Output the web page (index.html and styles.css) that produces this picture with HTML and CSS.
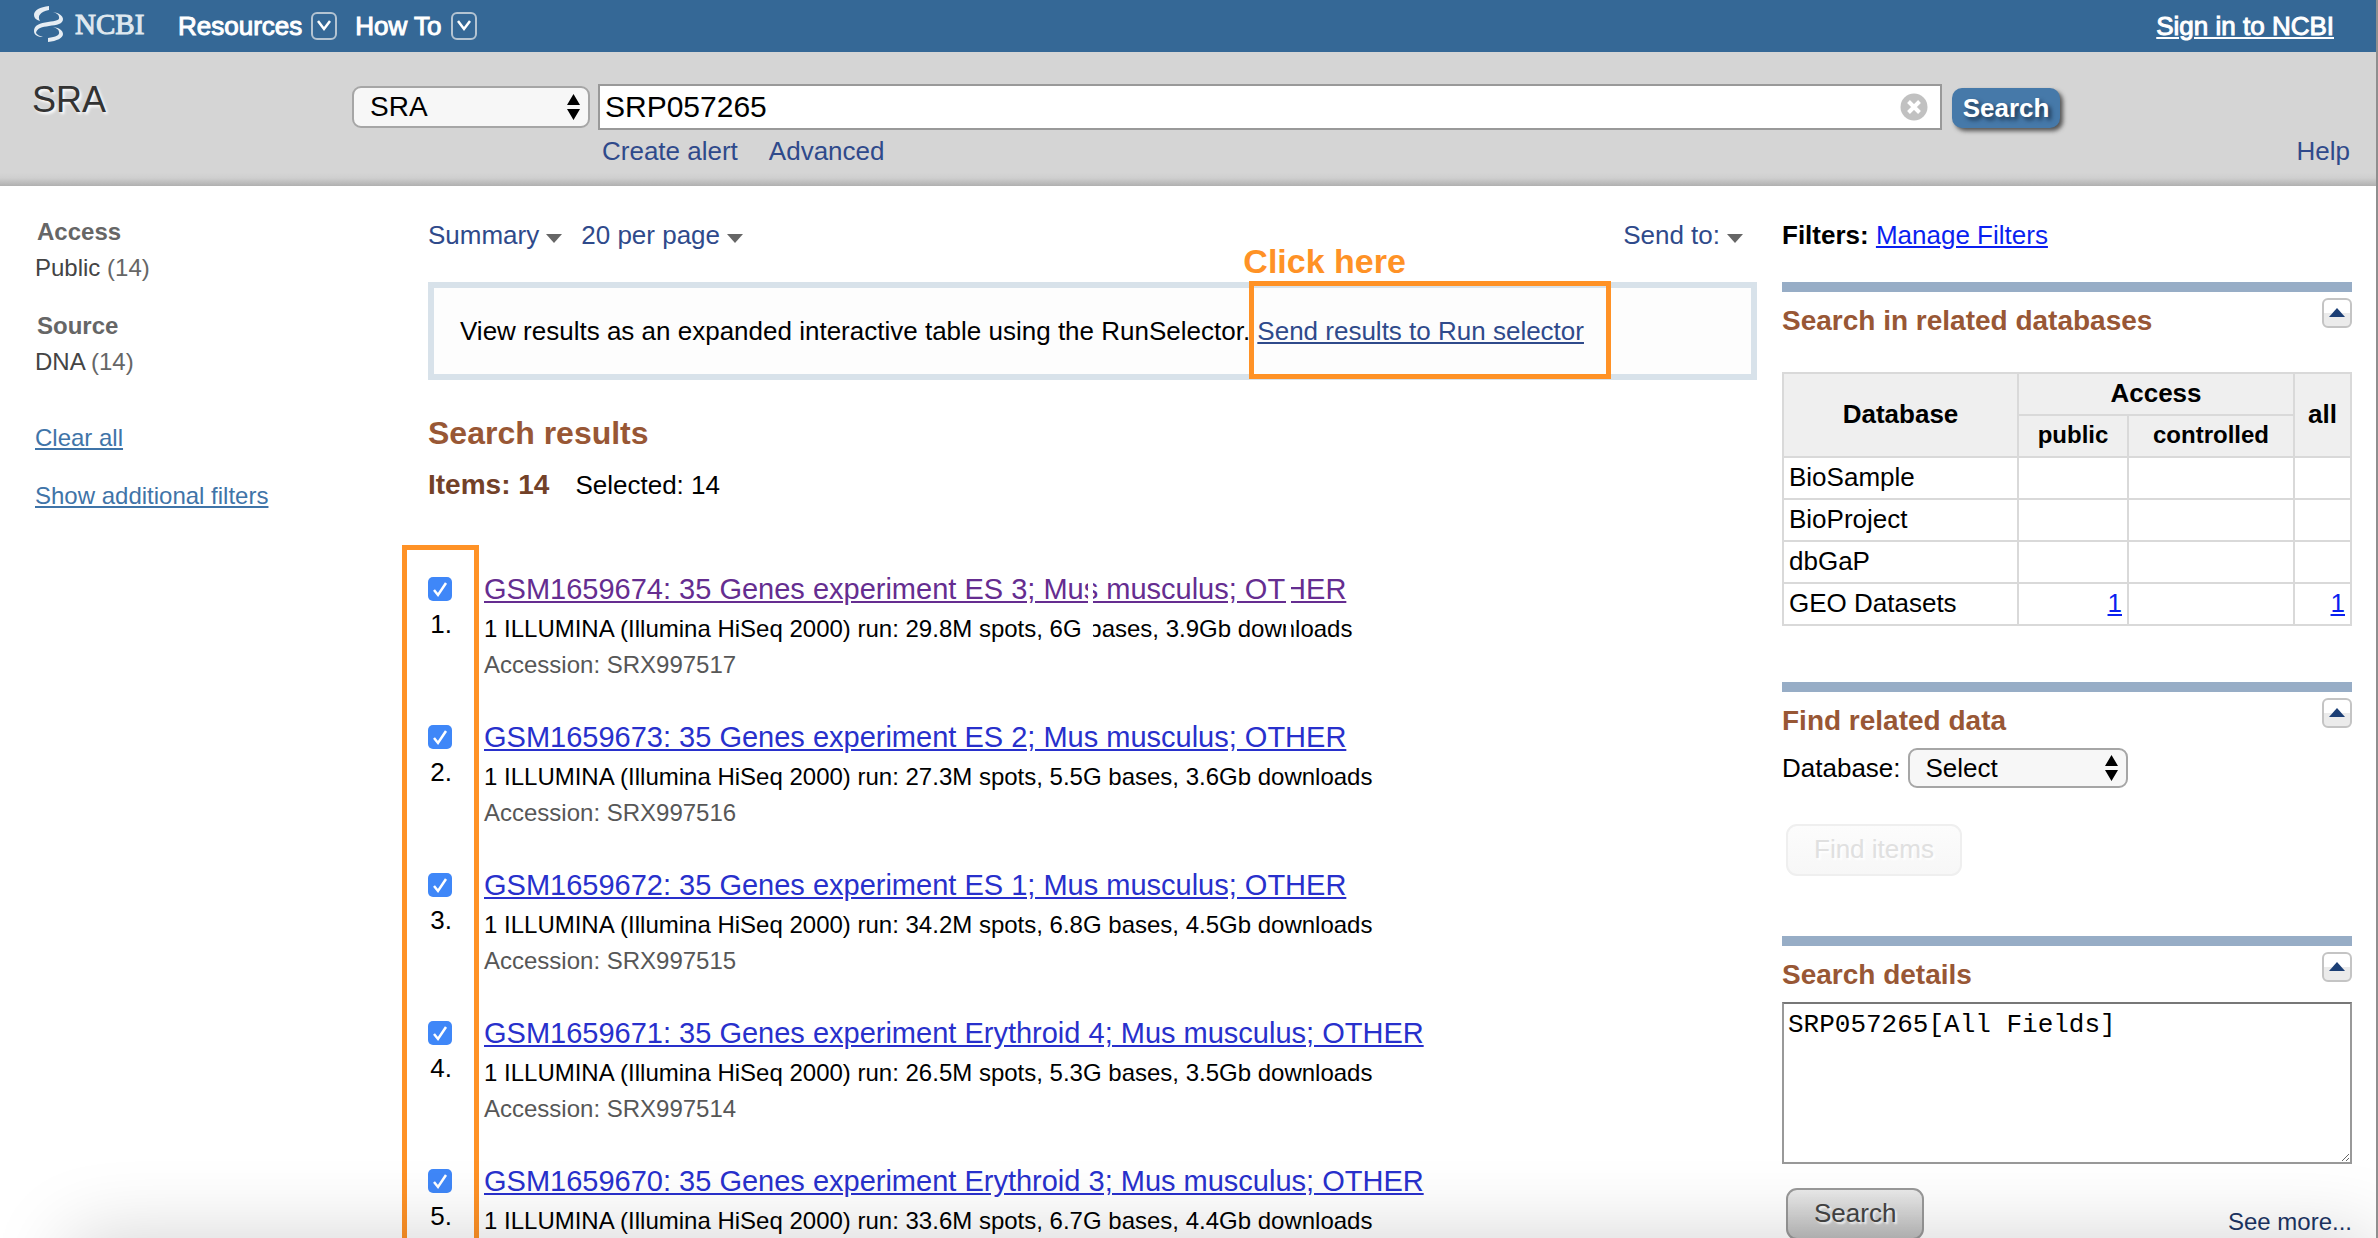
FILE: index.html
```html
<!DOCTYPE html>
<html lang="en">
<head>
<meta charset="utf-8">
<title>SRP057265 - SRA - NCBI</title>
<link rel="stylesheet" href="styles.css">
</head>
<body>
<svg width="0" height="0" class="defs" aria-hidden="true">
  <symbol id="updown" viewBox="0 0 13 26"><path d="M6.500 0L13 11H0zM0 15h13L6.500 26z"/></symbol>
  <symbol id="caret" viewBox="0 0 16 9"><path d="M0 0h16L8 9z" fill="#666"/></symbol>
  <symbol id="menu" viewBox="0 0 26 28"><rect x="1" y="1" width="24" height="26" rx="5" fill="none" stroke="#b4c4d2" stroke-width="2"/><path d="M7 9l6 8 6-8" fill="none" stroke="#fff" stroke-width="2.500"/></symbol>
  <symbol id="up" viewBox="0 0 16 9"><path d="M8 0l8 9H0z" fill="#1c3f75"/></symbol>
</svg>
<div class="app">
  <header class="topbar">
    <a class="logo" href="#" aria-label="NCBI home">
      <svg class="dna" viewBox="0 0 30 36" fill="#e6edf3" aria-hidden="true">
        <path d="M15 0C6 1 0 4 0 9c0 3 2 5 6 6-3-5 0-9 9-11z"/>
        <path d="M19 6c6 1 10 4 10 7 0 5-6 6-14 7-7 1-12 2-13 7 1 2 4 3 7 4-5 0-9-2-9-6 0-6 6-8 14-9 8-1 12-2 11-5 0-2-2-4-6-5z"/>
        <path d="M19 21c7 1 10 4 10 7 0 4-6 7-15 8v-4c8-1 12-3 11-6 0-2-2-4-6-5z"/>
      </svg>
      <span>NCBI</span>
    </a>
    <nav class="menus">
      <a href="#">Resources <svg class="menu-icon"><use href="#menu"/></svg></a>
      <a href="#">How To <svg class="menu-icon"><use href="#menu"/></svg></a>
    </nav>
    <a class="signin" href="#">Sign in to NCBI</a>
  </header>

  <form class="searchband">
    <h1>SRA</h1>
    <div class="searchrow">
      <span class="select db"><select aria-label="Database to search"><option>SRA</option></select><svg class="updown"><use href="#updown"/></svg></span>
      <span class="term">
        <input type="text" value="SRP057265" aria-label="Search term">
        <button type="button" class="clear" aria-label="Clear"><svg viewBox="0 0 28 28"><circle cx="14" cy="14" r="13.500" fill="#c1c1c1"/><path d="M8.500 8.500l11 11m0-11l-11 11" stroke="#fff" stroke-width="4"/></svg></button>
      </span>
      <button type="button" class="go">Search</button>
    </div>
    <div class="sublinks"><a href="#">Create alert</a><a href="#">Advanced</a><a class="help" href="#">Help</a></div>
  </form>

  <div class="columns">
    <aside class="filters">
      <section><h3>Access</h3><a href="#">Public <span>(14)</span></a></section>
      <section><h3>Source</h3><a href="#">DNA <span>(14)</span></a></section>
      <p class="actions"><a href="#">Clear all</a><a href="#">Show additional filters</a></p>
    </aside>

    <main class="content">
      <div class="toolbar">
        <a href="#">Summary<svg class="caret"><use href="#caret"/></svg></a>
        <a href="#">20 per page<svg class="caret"><use href="#caret"/></svg></a>
        <a class="sendto" href="#">Send to:<svg class="caret"><use href="#caret"/></svg></a>
      </div>
      <p class="notice">View results as an expanded interactive table using the RunSelector. <span class="target"><a href="#">Send results to Run selector</a><span class="mark"></span><strong class="callout">Click here</strong></span></p>
      <h2 class="title">Search results</h2>
      <p class="counts"><strong>Items: 14</strong><span>Selected: 14</span></p>
      <ol class="results">
        <li>
          <div class="pick"><input type="checkbox" id="r1" checked><label for="r1">1.</label></div>
          <div class="hit"><a class="visited" href="#">GSM1659674: 35 Genes experiment ES 3; Mus musculus; OTHER</a><p>1 ILLUMINA (Illumina HiSeq 2000) run: 29.8M spots, 6G bases, 3.9Gb downloads</p><p class="acc">Accession: SRX997517</p><span class="erased"></span></div>
        </li>
        <li>
          <div class="pick"><input type="checkbox" id="r2" checked><label for="r2">2.</label></div>
          <div class="hit"><a href="#">GSM1659673: 35 Genes experiment ES 2; Mus musculus; OTHER</a><p>1 ILLUMINA (Illumina HiSeq 2000) run: 27.3M spots, 5.5G bases, 3.6Gb downloads</p><p class="acc">Accession: SRX997516</p></div>
        </li>
        <li>
          <div class="pick"><input type="checkbox" id="r3" checked><label for="r3">3.</label></div>
          <div class="hit"><a href="#">GSM1659672: 35 Genes experiment ES 1; Mus musculus; OTHER</a><p>1 ILLUMINA (Illumina HiSeq 2000) run: 34.2M spots, 6.8G bases, 4.5Gb downloads</p><p class="acc">Accession: SRX997515</p></div>
        </li>
        <li>
          <div class="pick"><input type="checkbox" id="r4" checked><label for="r4">4.</label></div>
          <div class="hit"><a href="#">GSM1659671: 35 Genes experiment Erythroid 4; Mus musculus; OTHER</a><p>1 ILLUMINA (Illumina HiSeq 2000) run: 26.5M spots, 5.3G bases, 3.5Gb downloads</p><p class="acc">Accession: SRX997514</p></div>
        </li>
        <li>
          <div class="pick"><input type="checkbox" id="r5" checked><label for="r5">5.</label></div>
          <div class="hit"><a href="#">GSM1659670: 35 Genes experiment Erythroid 3; Mus musculus; OTHER</a><p>1 ILLUMINA (Illumina HiSeq 2000) run: 33.6M spots, 6.7G bases, 4.4Gb downloads</p></div>
        </li>
      </ol>
    </main>

    <aside class="side">
      <p class="manage"><strong>Filters:</strong> <a href="#">Manage Filters</a></p>

      <section class="portlet related">
        <header><h2>Search in related databases</h2><button type="button" class="toggle" aria-label="Collapse"><svg><use href="#up"/></svg></button></header>
        <table>
          <colgroup><col class="c-name"><col class="c-public"><col class="c-controlled"><col class="c-all"></colgroup>
          <thead>
            <tr><th rowspan="2">Database</th><th colspan="2">Access</th><th rowspan="2">all</th></tr>
            <tr class="sub"><th>public</th><th>controlled</th></tr>
          </thead>
          <tbody>
            <tr><td>BioSample</td><td></td><td></td><td></td></tr>
            <tr><td>BioProject</td><td></td><td></td><td></td></tr>
            <tr><td>dbGaP</td><td></td><td></td><td></td></tr>
            <tr><td>GEO Datasets</td><td class="num"><a href="#">1</a></td><td></td><td class="num"><a href="#">1</a></td></tr>
          </tbody>
        </table>
      </section>

      <section class="portlet find">
        <header><h2>Find related data</h2><button type="button" class="toggle" aria-label="Collapse"><svg><use href="#up"/></svg></button></header>
        <div class="field"><label for="rdb">Database:</label><span class="select"><select id="rdb"><option>Select</option></select><svg class="updown"><use href="#updown"/></svg></span></div>
        <button type="button" class="btn" disabled>Find items</button>
      </section>

      <section class="portlet details">
        <header><h2>Search details</h2><button type="button" class="toggle" aria-label="Collapse"><svg><use href="#up"/></svg></button></header>
        <textarea aria-label="Search details">SRP057265[All Fields]</textarea>
        <div class="foot"><button type="button" class="btn">Search</button><a href="#">See more...</a></div>
      </section>
    </aside>
  </div>
  <div class="shade"></div>
</div>
</body>
</html>
```
FILE: styles.css
```css
*, ::before { box-sizing: border-box; }
body { margin: 0; font: 26px/30px "Liberation Sans", Arial, sans-serif; color: #000; background: #fff; }
h1, h2, h3, p, ol { margin: 0; padding: 0; }
a { color: #2f4a8b; text-decoration: none; }
button, select, input, textarea { font: inherit; margin: 0; }
.defs { position: absolute; }

.app { position: relative; height: 100vh; overflow: hidden; border-right: 2px solid #8f8f8f; }

/* top bar */
.topbar { display: flex; align-items: center; height: 52px; padding: 0 42px 0 34px; background: #356896; }
.topbar a { color: #fff; }
.topbar .logo { display: flex; align-items: center; gap: 11px; width: 144px; padding-bottom: 4px; font: 29px/40px "Liberation Serif", "Times New Roman", serif; color: #dfe8ef; -webkit-text-stroke: 1px #dfe8ef; }
.dna { width: 30px; height: 36px; }
.menus { display: flex; gap: 18px; -webkit-text-stroke: 1px #fff; }
.menus a { display: flex; align-items: center; gap: 9px; }
.menu-icon { width: 26px; height: 28px; }
.topbar .signin { margin-left: auto; text-decoration: underline; -webkit-text-stroke: 1px #fff; }

/* search band */
.searchband { display: grid; grid-template-columns: 320px 1fr; padding: 32px 26px 20px 32px; height: 134px; background: linear-gradient(#d5d5d5 90%, #cfcfcf 94%, #b0b0b0); align-content: start; row-gap: 6px; }
.searchband h1 { font-size: 36px; font-weight: 400; line-height: 42px; color: #333; text-shadow: 2px 2px 3px #fff; margin-top: -5px; }
.searchrow { display: flex; align-items: center; padding-right: 290px; height: 46px; }
.select { display: inline-grid; align-items: center; }
.select > * { grid-area: 1 / 1; }
.select select { appearance: none; width: 100%; height: 40px; padding: 0 30px 0 16px; border: 2px solid #a6a6a6; border-radius: 9px; background: #f7f7f7; color: #000; }
.updown { width: 13px; height: 26px; justify-self: end; margin-right: 10px; pointer-events: none; }
.db { width: 238px; margin-right: 8px; }
.db select { height: 42px; font-size: 28px; }
.term { flex: 1; display: grid; align-items: center; margin-right: 10px; }
.term > * { grid-area: 1 / 1; }
.term input { width: 100%; height: 46px; padding: 0 50px 0 5px; border: 2px solid #999; background: #fff; font-size: 30px; }
.clear { justify-self: end; width: 28px; height: 28px; margin-right: 14px; padding: 0; border: 0; background: none; display: flex; }
.go { width: 108px; height: 40px; margin-top: 2px; padding: 0; border: 0; border-radius: 10px; background: #4679a9; color: #fff; font-weight: 700; text-shadow: 3px 3px 4px #1c3550; box-shadow: 3px 3px 4px #555; }
.sublinks { grid-column: 2; display: flex; gap: 31px; padding-left: 250px; }
.help { margin-left: auto; }

/* page columns */
.columns { display: flex; padding: 0 24px 0 35px; }
.filters { width: 393px; flex: none; padding-top: 28px; font-size: 24px; line-height: 36px; }
.filters section { margin-bottom: 22px; }
.filters h3 { font-size: 24px; padding-left: 2px; color: #666; }
.filters section a { color: #444; }
.filters section span { color: #666; }
.actions { display: flex; flex-direction: column; align-items: start; gap: 22px; padding-top: 18px; }
.actions a { color: #3f74a8; text-decoration: underline; }

.content { flex: 1; min-width: 0; padding-top: 34px; }
.toolbar { display: flex; gap: 19px; padding-right: 14px; }
.toolbar a { display: flex; align-items: center; gap: 7px; }
.caret { width: 16px; height: 9px; margin-top: 6px; }
.sendto { margin-left: auto; }
.notice { margin-top: 32px; padding: 28px 26px; border: 6px solid #d8e2ea; background: #fdfdfd; }
.target { position: relative; }
.target a { text-decoration: underline; }
.mark { position: absolute; top: -35px; left: -8px; right: -27px; height: 98px; border: 5px solid #ff9226; pointer-events: none; }
.callout { position: absolute; left: -14px; top: -74px; font-size: 34px; line-height: 38px; color: #ff9226; white-space: nowrap; }
.title { margin-top: 35px; font-size: 32px; line-height: 36px; color: #985735; }
.counts { display: flex; align-items: baseline; gap: 26px; margin-top: 18px; line-height: 32px; }
.counts strong { font-size: 28px; color: #724128; }

.results { position: relative; list-style: none; display: flex; flex-direction: column; gap: 37px; margin-top: 71px; }
.results::before { content: ""; position: absolute; left: -26px; top: -27px; bottom: -10px; width: 77px; border: 5px solid #ff9226; border-bottom: 0; pointer-events: none; }
.results li { display: flex; }
.pick { width: 56px; flex: none; padding-top: 5px; }
.pick input { appearance: none; display: block; width: 24px; height: 24px; border-radius: 5px; background: #3f87f8 url("data:image/svg+xml,%3Csvg xmlns='http://www.w3.org/2000/svg' viewBox='0 0 24 24'%3E%3Cpath d='M6 13l4 5 8-12' fill='none' stroke='%23fff' stroke-width='2.500'/%3E%3C/svg%3E"); }
.pick label { display: block; width: 24px; margin-top: 8px; text-align: right; }
.hit { position: relative; font-size: 24px; line-height: 36px; }
.hit a { display: block; margin-bottom: 5px; font-size: 29px; line-height: 34px; color: #2830cc; text-decoration: underline; }
.hit .visited { color: #652d90; }
.acc { color: #575757; }
.erased { position: absolute; left: 604px; top: -4px; width: 203px; height: 78px; border: solid #fff; border-width: 0 5px; pointer-events: none; }

/* right column */
.side { width: 570px; flex: none; margin-left: 25px; padding-top: 34px; }
.manage { margin-bottom: 32px; }
.side .manage a, .num a { color: #0a1ff0; text-decoration: underline; }
.portlet { border-top: 10px solid #97adc6; }
.portlet header { display: flex; justify-content: space-between; align-items: start; padding-top: 6px; margin-bottom: 11px; }
.portlet h2 { margin-top: 7px; font-size: 28px; line-height: 32px; color: #985735; }
.toggle { display: grid; place-items: center; width: 30px; height: 30px; padding: 0 0 2px; border: 2px solid #c4c4c4; border-radius: 6px; background: linear-gradient(#fff 50%, #ebebeb 50%); }
.toggle svg { width: 16px; height: 9px; }
.related { padding-bottom: 56px; }
.related header { margin-bottom: 35px; }
table { width: 100%; table-layout: fixed; border-collapse: collapse; }
.c-name { width: 235px; }
.c-public { width: 110px; }
.c-all { width: 57px; }
th, td { height: 42px; padding: 0 5px 2px; border: 2px solid #d9d9d9; line-height: 30px; }
th { background: #efefef; padding: 0 0 2px; }
.sub th { font-size: 24px; }
.num { text-align: right; }
.find { padding-bottom: 60px; }
.field { display: flex; align-items: center; gap: 7px; margin-bottom: 36px; }
.field .select { width: 220px; }
.btn { display: block; height: 52px; margin-left: 4px; padding: 0 26px 2px; border: 2px solid #999; border-radius: 11px; background: linear-gradient(#eaeaea, #bfbfbf); color: #444; text-shadow: 2px 2px 2px #fff; }
.btn:disabled { border-color: #efefef; background: linear-gradient(#fcfcfc, #f7f7f7); color: #e0e0e0; }
.details textarea { display: block; width: 100%; height: 162px; padding: 6px 4px; border: 2px solid #999; border-top-color: #777; background: #fff; font-family: "Liberation Mono", "Courier New", monospace; }
.foot { display: flex; justify-content: space-between; align-items: end; margin-top: 24px; }
.foot a { font-size: 24px; line-height: 28px; margin-bottom: 4px; color: #1c3564; }

/* soft shadow rising from the window's lower edge */
.shade { position: absolute; top: 100%; left: 70px; right: 0; height: 120px; box-shadow: 0 0 80px 0 rgba(0, 0, 0, .18); pointer-events: none; }
```
